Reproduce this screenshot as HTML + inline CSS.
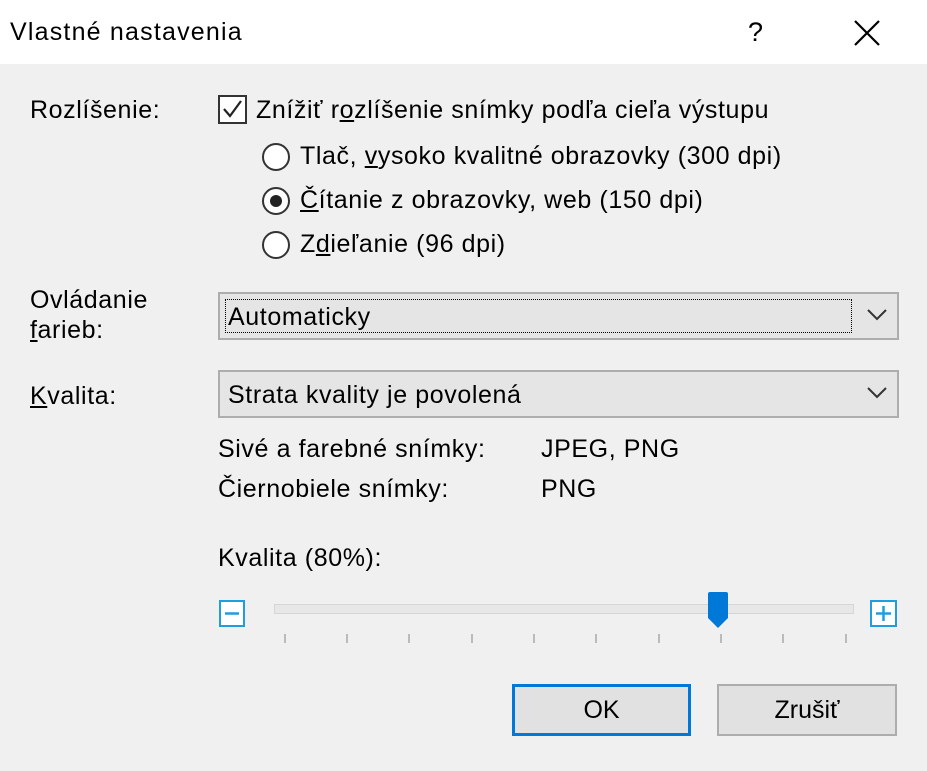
<!DOCTYPE html>
<html><head><meta charset="utf-8"><style>
body{margin:0;width:927px;height:771px;overflow:hidden;background:#f0f0f0;font-family:"Liberation Sans",sans-serif;color:#000;position:relative}
.a{position:absolute;font-size:25px;letter-spacing:0.6px;line-height:28px;white-space:nowrap}
.title{position:absolute;left:0;top:0;width:927px;height:64px;background:#fff}
.cb{position:absolute;border:2px solid #333;background:#fff;box-sizing:border-box}
.rad{position:absolute;width:28px;height:28px;border:2px solid #333;border-radius:50%;background:#fff;box-sizing:border-box}
.combo{position:absolute;left:218px;width:681px;height:48px;background:#e5e5e5;border:2px solid #adadad;box-sizing:border-box}
.btn{position:absolute;top:684px;height:52px;background:#e1e1e1;box-sizing:border-box;text-align:center;line-height:46px;font-size:25px}
.tick{position:absolute;top:634px;width:2px;height:9px;background:#bbb}
u{text-decoration:underline}
</style></head><body>
<div class="title"></div>
<div class="a" style="left:10px;top:18px;font-size:25px;letter-spacing:1.2px">Vlastné nastavenia</div>
<div class="a" style="left:748px;top:18px;font-size:27px">?</div>
<svg style="position:absolute;left:853px;top:19px" width="28" height="28"><path d="M2 2L26 26M26 2L2 26" stroke="#000" stroke-width="2.2"/></svg>

<div class="a" style="left:30px;top:96px">Rozlíšenie:</div>
<div class="cb" style="left:218px;top:95px;width:29px;height:29px"></div>
<svg style="position:absolute;left:220px;top:97px" width="25" height="25"><path d="M4 12L10 19L21 4" stroke="#222" stroke-width="2.2" fill="none"/></svg>
<div class="a" style="left:256px;top:96px">Znížiť r<u>o</u>zlíšenie snímky podľa cieľa výstupu</div>
<div class="rad" style="left:262px;top:143px"></div>
<div class="a" style="left:300px;top:142px">Tlač, <u>v</u>ysoko kvalitné obrazovky (300 dpi)</div>
<div class="rad" style="left:262px;top:187px"><div style="position:absolute;left:6px;top:6px;width:12px;height:12px;border-radius:50%;background:#222"></div></div>
<div class="a" style="left:300px;top:186px"><u>Č</u>ítanie z obrazovky, web (150 dpi)</div>
<div class="rad" style="left:262px;top:231px"></div>
<div class="a" style="left:300px;top:230px">Z<u>d</u>ieľanie (96 dpi)</div>

<div class="a" style="left:30px;top:286px">Ovládanie</div>
<div class="a" style="left:30px;top:316px"><u>f</u>arieb:</div>
<div class="combo" style="top:292px"><div style="position:absolute;left:5px;top:5px;width:627px;height:34px;border:1px dotted #000;box-sizing:border-box"></div></div>
<div class="a" style="left:228px;top:303px">Automaticky</div>
<svg style="position:absolute;left:866px;top:308px" width="22" height="14"><path d="M2 2L11 11L20 2" stroke="#333" stroke-width="2" fill="none"/></svg>

<div class="a" style="left:30px;top:382px"><u>K</u>valita:</div>
<div class="combo" style="top:370px"></div>
<div class="a" style="left:228px;top:381px">Strata kvality je povolená</div>
<svg style="position:absolute;left:866px;top:386px" width="22" height="14"><path d="M2 2L11 11L20 2" stroke="#333" stroke-width="2" fill="none"/></svg>

<div class="a" style="left:218px;top:435px">Sivé a farebné snímky:</div>
<div class="a" style="left:541px;top:435px">JPEG, PNG</div>
<div class="a" style="left:218px;top:475px">Čiernobiele snímky:</div>
<div class="a" style="left:541px;top:475px">PNG</div>

<div class="a" style="left:218px;top:544px">Kvalita (80%):</div>
<svg style="position:absolute;left:218px;top:599px" width="30" height="30"><rect x="2" y="2" width="24" height="25" fill="#fff" stroke="#1e9de0" stroke-width="2"/><path d="M7 14.5H21" stroke="#1e9de0" stroke-width="2.5"/></svg>
<div style="position:absolute;left:274px;top:604px;width:578px;height:8px;background:#e7e7e7;border:1px solid #d6d6d6"></div>
<svg style="position:absolute;left:706px;top:590px" width="24" height="40"><path d="M2 4Q2 2 4 2H20Q22 2 22 4V28L12 38L2 28Z" fill="#0078d7"/></svg>
<svg style="position:absolute;left:869px;top:599px" width="30" height="30"><rect x="2" y="2" width="25" height="25" fill="#fff" stroke="#1e9de0" stroke-width="2"/><path d="M7 14.5H22M14.5 7V22" stroke="#1e9de0" stroke-width="2.5"/></svg>
<div class="tick" style="left:284px"></div><div class="tick" style="left:346px"></div><div class="tick" style="left:408px"></div><div class="tick" style="left:471px"></div><div class="tick" style="left:533px"></div><div class="tick" style="left:595px"></div><div class="tick" style="left:658px"></div><div class="tick" style="left:720px"></div><div class="tick" style="left:782px"></div><div class="tick" style="left:845px"></div>

<div class="btn" style="left:512px;width:179px;border:3px solid #0078d7">OK</div>
<div class="btn" style="left:717px;width:180px;border:2px solid #adadad;line-height:48px">Zrušiť</div>
</body></html>
